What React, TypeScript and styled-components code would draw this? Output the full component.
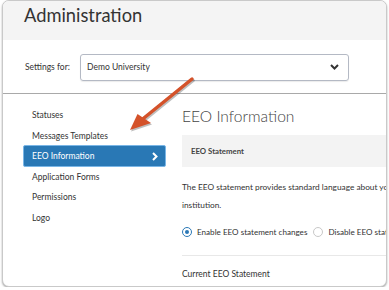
import React from 'react'
import styled, { createGlobalStyle } from 'styled-components'

const GlobalStyle = createGlobalStyle`
   html, body {
      margin: 0;
      padding: 0;
      background: #fff;
   }
   body {
      font-family: Lato, "Open Sans", sans-serif;
      color: #333;
   }
`

const Window = styled.div`
   position: relative;
   box-sizing: border-box;
   width: 385px;
   height: 287px;
   margin-left: 2px;
   border: 1px solid #c9c9c9;
   border-radius: 7px;
   overflow: hidden;
   box-shadow: 0 1px 2px rgba(0, 0, 0, 0.35);
   background: #fff;
`
const Header = styled.div`
   height: 39px;
   background: #f4f4f4;
   padding-left: 21px;
   display: flex;
   align-items: center;
`
const Title = styled.h1`
   margin: 0;
   font-size: 18.3px;
   font-weight: 400;
   color: #333;
   padding-bottom: 11px;
`
const SettingsBar = styled.div`
   height: 52px;
   display: flex;
   align-items: center;
   padding-left: 21px;
   border-bottom: 1px solid #a9a9a9;
   padding-top: 1px;
`
const SettingsLabel = styled.span`
   font-size: 8.5px;
   width: 55px;
   padding-left: 1px;
`
const Select = styled.div`
   box-sizing: border-box;
   width: 269px;
   height: 27px;
   border: 1px solid #b4b9c4;
   border-radius: 3px;
   display: flex;
   align-items: center;
   justify-content: space-between;
   padding: 0 9px 0 6px;
   font-size: 8.5px;
   box-shadow: 0 1px 1px rgba(0, 0, 0, 0.08);
`
const Body = styled.div`
   display: flex;
`
const Sidebar = styled.ul`
   list-style: none;
   margin: 0;
   padding: 11px 0 0 20px;
   width: 143px;
   flex-shrink: 0;
`
const NavItem = styled.li<{ $active?: boolean }>`
   box-sizing: border-box;
   height: 20.5px;
   display: flex;
   align-items: center;
   justify-content: space-between;
   padding: 0 7px 0 8px;
   font-size: 8.5px;
   color: ${p => (p.$active ? '#fff' : '#333')};
   background: ${p => (p.$active ? '#2978b5' : 'transparent')};
   border: 1px solid ${p => (p.$active ? '#7ab6e6' : 'transparent')};
   border-radius: 2px;
   ${p => p.$active && 'height: 22px; margin: -0.75px 0;'}
`
const Content = styled.div`
   padding-left: 16px;
   flex: 1;
   min-width: 0;
   white-space: nowrap;
`
const Heading = styled.h2`
   margin: 10px 0 0;
   font-size: 15.6px;
   font-weight: 300;
   color: #444;
   height: 31px;
   line-height: 24px;
`
const SectionBar = styled.div`
   height: 32px;
   background: #f3f3f3;
   display: flex;
   align-items: center;
   padding-left: 9px;
   font-size: 7.8px;
   font-weight: 700;
   color: #444;
   margin-right: -20px;
`
const Paragraph = styled.p`
   margin: 11px 0 0;
   font-size: 8.3px;
   line-height: 18px;
   color: #333;
`
const RadioRow = styled.div`
   display: flex;
   align-items: center;
   gap: 6px;
   margin-top: 9px;
   height: 18px;
`
const RadioLabel = styled.label`
   display: flex;
   align-items: center;
   gap: 5px;
   font-size: 8.1px;
   color: #333;
`
const RadioDot = styled.span<{ $checked?: boolean }>`
   box-sizing: border-box;
   width: 10px;
   height: 10px;
   border-radius: 50%;
   border: 1.5px solid ${p => (p.$checked ? '#2a78b6' : '#c8c8c8')};
   display: flex;
   align-items: center;
   justify-content: center;
   &::after {
      content: '';
      width: 4px;
      height: 4px;
      border-radius: 50%;
      background: ${p => (p.$checked ? '#2a78b6' : 'transparent')};
   }
`
const Divider = styled.hr`
   border: 0;
   border-top: 1px solid #e8e8e8;
   margin: 14px -20px 0 0;
`
const SubLabel = styled.div`
   font-size: 8.5px;
   margin-top: 13px;
`
const Pointer = styled.svg`
   position: absolute;
   left: 0;
   top: 0;
   pointer-events: none;
`

const Chevron = ({ color = '#333' }: { color?: string }) => (
   <svg width="9" height="6" viewBox="0 0 9 6">
      <path d="M1 1 L4.5 4.5 L8 1" fill="none" stroke={color} strokeWidth="2" />
   </svg>
)
const RightChevron = () => (
   <svg width="6" height="9" viewBox="0 0 6 9">
      <path d="M1 1 L4.5 4.5 L1 8" fill="none" stroke="#fff" strokeWidth="2" />
   </svg>
)

const navItems = ['Statuses', 'Messages Templates', 'EEO Information', 'Application Forms', 'Permissions', 'Logo']

const App: React.FC = () => {
   return (
      <>
         <GlobalStyle />
         <Window>
            <Header>
               <Title>Administration</Title>
            </Header>
            <SettingsBar>
               <SettingsLabel>Settings for:</SettingsLabel>
               <Select>
                  <span>Demo University</span>
                  <Chevron />
               </Select>
            </SettingsBar>
            <Body>
               <Sidebar>
                  {navItems.map(item => (
                     <NavItem key={item} $active={item === 'EEO Information'}>
                        {item}
                        {item === 'EEO Information' && <RightChevron />}
                     </NavItem>
                  ))}
               </Sidebar>
               <Content>
                  <Heading>EEO Information</Heading>
                  <SectionBar>EEO Statement</SectionBar>
                  <Paragraph>
                     The EEO statement provides standard language about your
                     <br />
                     institution.
                  </Paragraph>
                  <RadioRow>
                     <RadioLabel><RadioDot $checked />Enable EEO statement changes</RadioLabel>
                     <RadioLabel><RadioDot />Disable EEO statement changes</RadioLabel>
                  </RadioRow>
                  <Divider />
                  <SubLabel>Current EEO Statement</SubLabel>
               </Content>
            </Body>
            <Pointer width="385" height="287" viewBox="0 0 385 287">
               <g transform="translate(1,1.5)" opacity="0.25">
                  <path d="M189 78 L136 121" stroke="#000" strokeWidth="3.5" strokeLinecap="round" />
                  <polygon points="127,129 134.5,113 148,122" fill="#000" />
               </g>
               <path d="M189 78 L136 121" stroke="#d4522a" strokeWidth="3.5" strokeLinecap="round" />
               <polygon points="127,129 134.5,113 148,122" fill="#d4522a" />
            </Pointer>
         </Window>
      </>
   )
}
export default App
